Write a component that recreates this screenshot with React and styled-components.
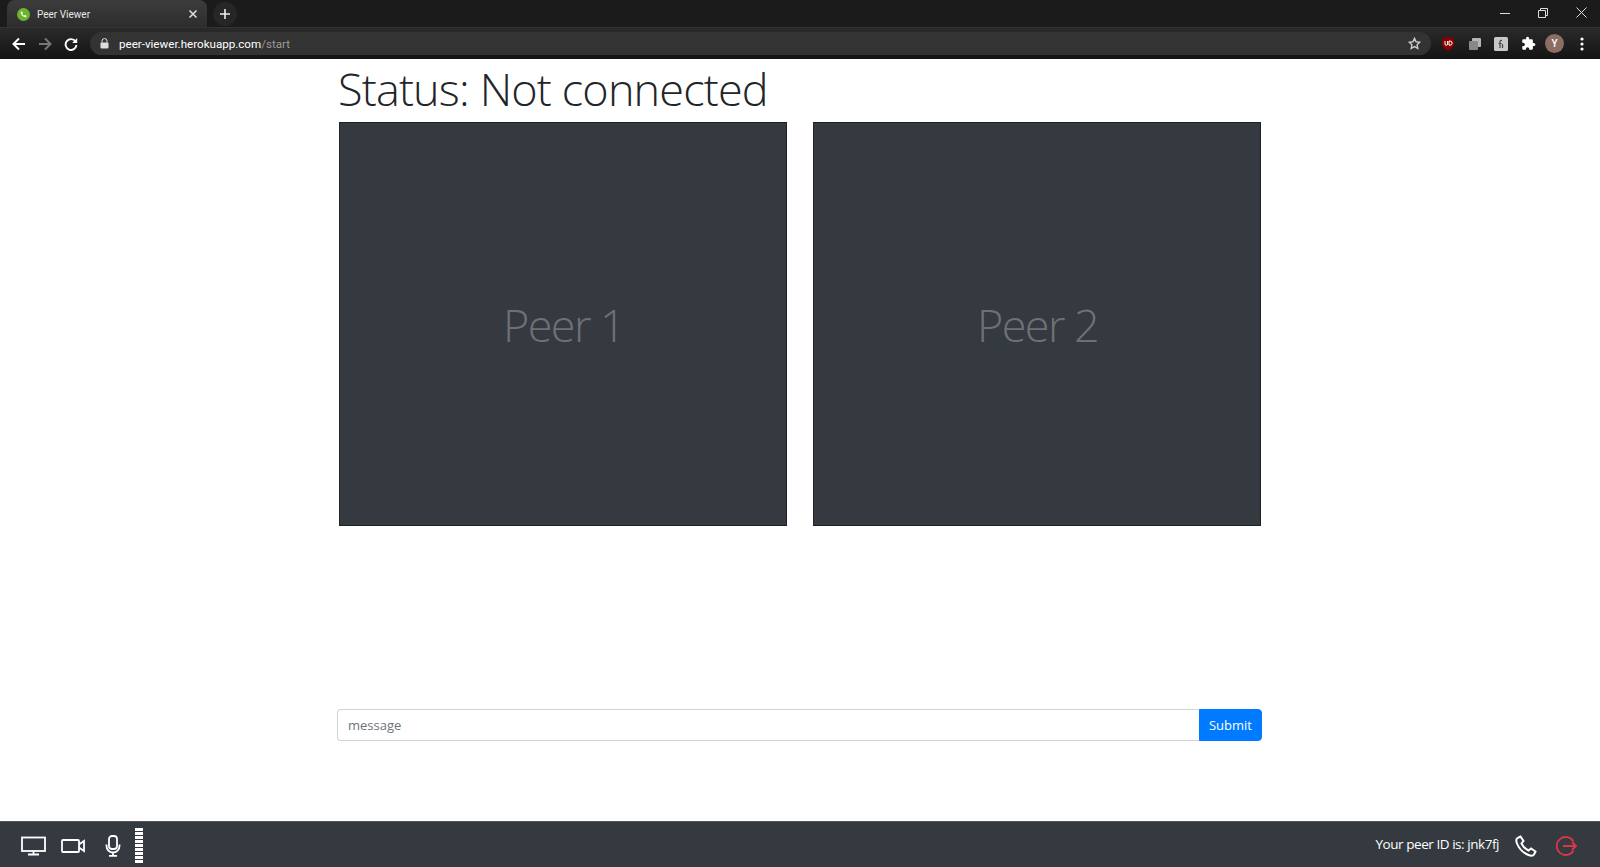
import React from 'react';
import styled, { createGlobalStyle } from 'styled-components';

const GlobalStyle = createGlobalStyle`
  html, body {
    margin: 0;
    padding: 0;
    height: 100%;
    background: #fff;
    overflow: hidden;
  }
  * { box-sizing: border-box; }
`;

const Page = styled.div`
  height: 867px;
  display: flex;
  flex-direction: column;
  font-family: "Open Sans", "Liberation Sans", sans-serif;
`;

const TabStrip = styled.div`
  height: 27px;
  background: #1b1b1b;
  display: flex;
  align-items: flex-end;
  padding-left: 7px;
`;

const Tab = styled.div`
  width: 200px;
  height: 27px;
  border-radius: 8px 8px 0 0;
  background: linear-gradient(#3c3c3c, #2d2d2d);
  display: flex;
  align-items: center;
  padding: 1px 9px 0 10px;
  color: #e8e8e8;
  font: 10px "Roboto", sans-serif;
`;

const TabTitle = styled.span`
  margin-left: 7px;
  flex: 1;
`;

const NewTab = styled.div`
  width: 24px;
  height: 24px;
  margin: 0 0 1px 6px;
  border-radius: 50%;
  background: #262626;
  display: flex;
  align-items: center;
  justify-content: center;
`;

const WindowControls = styled.div`
  margin-left: auto;
  height: 27px;
  display: flex;
  align-items: center;
  gap: 22px;
  padding: 0 11px 2px 0;
`;

const WindowButton = styled.div`
  width: 16px;
  height: 16px;
  display: flex;
  align-items: center;
  justify-content: center;
`;

const AddressBar = styled.div`
  height: 32px;
  background: linear-gradient(#2a2a2a, #141414);
  border-top: 1px solid #333;
  display: flex;
  align-items: center;
  padding: 0 8px 0 10px;
`;

const NavIcons = styled.div`
  display: flex;
  align-items: center;
  gap: 8px;
  width: 80px;
`;

const NavIcon = styled.div`
  width: 18px;
  height: 18px;
  display: flex;
  align-items: center;
  justify-content: center;
`;

const Omnibox = styled.div`
  width: 1341px;
  height: 23px;
  border-radius: 12px;
  background: #333;
  display: flex;
  align-items: center;
  padding: 0 10px 0 10px;
  font: 11.6px "Roboto", sans-serif;
  color: #fff;
`;

const UrlText = styled.span`
  margin-left: 10px;
  flex: 1;
`;

const UrlPath = styled.span`
  color: #9a9a9a;
`;

const Extensions = styled.div`
  display: flex;
  align-items: center;
  gap: 12.5px;
  margin-left: 10px;
`;

const Avatar = styled.div`
  width: 19px;
  height: 19px;
  margin: 0 3px 0 -3px;
  border-radius: 50%;
  background: #8d6e63;
  color: #fff;
  font: 500 10px/19px "Roboto", sans-serif;
  text-align: center;
`;

const Main = styled.main`
  flex: 1;
  width: 925px;
  margin-left: 337px;
  display: flex;
  flex-direction: column;
`;

const Status = styled.h1`
  margin: 0;
  height: 63px;
  padding-left: 1px;
  font-size: 45px;
  font-weight: 300;
  line-height: 59px;
  letter-spacing: -0.85px;
  color: #212529;
  white-space: nowrap;
`;

const Videos = styled.div`
  display: flex;
  gap: 26px;
  padding-left: 2px;
`;

const VideoBox = styled.div`
  width: 448px;
  height: 404px;
  padding-left: 1px;
  background: #343a40;
  border: 1px solid #1d2125;
  border-left-color: #23272b;
  display: flex;
  align-items: center;
  justify-content: center;
  color: #6e7174;
  font-size: 45px;
  font-weight: 300;
  letter-spacing: -1.6px;
`;

const MessageForm = styled.form`
  display: flex;
  height: 32px;
  margin-top: 183px;
`;

const MessageInput = styled.input`
  flex: 1;
  min-width: 0;
  height: 32px;
  padding: 0 10px;
  border: 1px solid #ced4da;
  border-right: 0;
  border-radius: 4px 0 0 4px;
  font: 13px "Open Sans", sans-serif;
  outline: none;
  &::placeholder { color: #6c757d; }
`;

const SubmitButton = styled.button`
  width: 63px;
  height: 32px;
  border: 1px solid #007bff;
  border-radius: 0 4px 4px 0;
  background: #007bff;
  color: #fff;
  font: 13px "Open Sans", sans-serif;
  padding: 0;
`;

const Footer = styled.footer`
  height: 46px;
  background: #343a40;
  border-top: 1px solid #50555a;
  display: flex;
  align-items: center;
  padding: 3px 23px 0 21px;
`;

const MediaControls = styled.div`
  display: flex;
  align-items: center;
`;

const IconSlot = styled.div`
  display: flex;
  align-items: center;
  justify-content: center;
  width: ${p => p.$w}px;
  margin-right: ${p => p.$gap || 0}px;
`;

const MicLevel = styled.div`
  width: 8px;
  height: 36px;
  background: repeating-linear-gradient(#fff 0 3px, #343a40 3px 4px);
`;

const PeerInfo = styled.div`
  margin-left: auto;
  display: flex;
  align-items: center;
  color: #fff;
  font-size: 13.5px;
  letter-spacing: -0.45px;
`;

const PeerLabel = styled.span`
  margin: 0 16px 5px 0;
`;

const App = () => (
  <>
    <GlobalStyle />
    <Page>
      <header>
        <TabStrip>
          <Tab>
            <svg width="13" height="13" viewBox="0 0 24 24">
              <circle cx="12" cy="12" r="12" fill="#6bb52e" />
              <path d="M8 6.5l2 .4.8 3-1.3 1c.7 1.5 2 2.800 3.600 3.500l1.100-1.300 3 .8.300 2c-.5.900-1.500 1.300-2.500 1.100-4.500-.9-7.500-4-8.300-8.200C6.500 7.800 7 6.900 8 6.500z" fill="#fff" />
            </svg>
            <TabTitle>Peer Viewer</TabTitle>
            <svg width="10" height="10" viewBox="0 0 10 10" stroke="#ddd" strokeWidth="1.6">
              <path d="M1.500 1.500l7 7M8.500 1.500l-7 7" />
            </svg>
          </Tab>
          <NewTab>
            <svg width="12" height="12" viewBox="0 0 12 12" stroke="#eee" strokeWidth="1.600">
              <path d="M6 1v10M1 6h10" />
            </svg>
          </NewTab>
          <WindowControls>
            <WindowButton>
              <svg width="10" height="10" viewBox="0 0 10 10" stroke="#ddd">
                <path d="M0 5.500h10" />
              </svg>
            </WindowButton>
            <WindowButton>
              <svg width="10" height="10" viewBox="0 0 10 10" stroke="#ddd" fill="none">
                <path d="M.5 2.500h7v7h-7zM2.500 2.500v-2h7v7h-2" />
              </svg>
            </WindowButton>
            <WindowButton>
              <svg width="11" height="11" viewBox="0 0 11 11" stroke="#ddd">
                <path d="M.5.5l10 10M10.500.5l-10 10" />
              </svg>
            </WindowButton>
          </WindowControls>
        </TabStrip>
        <AddressBar>
          <NavIcons>
            <NavIcon>
              <svg width="14" height="14" viewBox="0 0 14 14" stroke="#fff" strokeWidth="2" fill="none">
                <path d="M13 7H2M7 1.500L1.500 7 7 12.500" />
              </svg>
            </NavIcon>
            <NavIcon>
              <svg width="14" height="14" viewBox="0 0 14 14" stroke="#777" strokeWidth="2" fill="none">
                <path d="M1 7h11M7 1.500L12.500 7 7 12.500" />
              </svg>
            </NavIcon>
            <NavIcon>
              <svg width="14" height="14" viewBox="0 0 14 14" fill="none">
                <path d="M11.500 4.500A5.400 5.400 0 1 0 12.400 8" stroke="#fff" strokeWidth="1.900" />
                <path d="M13.200 1v5h-5z" fill="#fff" />
              </svg>
            </NavIcon>
          </NavIcons>
          <Omnibox>
            <svg width="9" height="11" viewBox="0 0 9 11">
              <path d="M2 4.500V3a2.500 2.500 0 0 1 5 0v1.500" stroke="#ddd" strokeWidth="1" fill="none" />
              <rect x="0.500" y="4.500" width="8" height="6" rx="1" fill="#ddd" />
            </svg>
            <UrlText>peer-viewer.herokuapp.com<UrlPath>/start</UrlPath></UrlText>
            <svg width="13" height="13" viewBox="0 0 24 24" fill="none" stroke="#ccc" strokeWidth="2.500">
              <path d="M12 2.500l2.900 6.300 6.900.8-5.100 4.700 1.400 6.800-6.100-3.400-6.100 3.400 1.400-6.800-5.100-4.700 6.900-.8z" />
            </svg>
          </Omnibox>
          <Extensions>
            <svg width="14" height="15" viewBox="0 0 14 15">
              <path d="M7 .5l6 2v5c0 3.500-2.500 5.800-6 7-3.500-1.200-6-3.500-6-7v-5z" fill="#800" />
              <path d="M4 5v3a1.300 1.300 0 0 0 2.600 0V5M8 5v4.200h1a2 2 0 0 0 0-4.200z" fill="none" stroke="#fff" strokeWidth="1" />
            </svg>
            <svg width="14" height="14" viewBox="0 0 14 14">
              <rect x="4" y="1" width="9" height="9" rx="1" fill="#b5b5b5" />
              <rect x="1" y="4" width="9" height="9" rx="1" fill="#888" />
            </svg>
            <svg width="14" height="14" viewBox="0 0 14 14">
              <rect width="14" height="14" rx="1.500" fill="#c8c8c8" />
              <path d="M6 11V4.500c0-1 1-1.500 2-1M4.500 6.500h3M8.500 7v4" stroke="#444" strokeWidth="1.200" fill="none" />
            </svg>
            <svg width="15" height="15" viewBox="0 0 24 24" fill="#fff">
              <path d="M20.500 11H19V7a2 2 0 0 0-2-2h-4V3.500a2.500 2.500 0 0 0-5 0V5H4a2 2 0 0 0-2 2v3.800h1.500a2.700 2.700 0 0 1 0 5.400H2V20a2 2 0 0 0 2 2h3.800v-1.500a2.700 2.700 0 0 1 5.400 0V22H17a2 2 0 0 0 2-2v-4h1.500a2.500 2.500 0 0 0 0-5z" />
            </svg>
            <Avatar>Y</Avatar>
            <svg width="4" height="14" viewBox="0 0 4 14" fill="#fff">
              <circle cx="2" cy="2" r="1.600" />
              <circle cx="2" cy="7" r="1.600" />
              <circle cx="2" cy="12" r="1.600" />
            </svg>
          </Extensions>
        </AddressBar>
      </header>
      <Main>
        <Status>Status: Not connected</Status>
        <Videos>
          <VideoBox>Peer 1</VideoBox>
          <VideoBox>Peer 2</VideoBox>
        </Videos>
        <MessageForm>
          <MessageInput placeholder="message" />
          <SubmitButton type="button">Submit</SubmitButton>
        </MessageForm>
      </Main>
      <Footer>
        <MediaControls>
          <IconSlot $w={25} $gap={15}>
            <svg width="25" height="20" viewBox="0 0 25 20" fill="none" stroke="#fff" strokeWidth="1.800">
              <rect x="1" y="1.500" width="23" height="13.500" />
              <path d="M12.500 15v3M7 18.500h11" />
            </svg>
          </IconSlot>
          <IconSlot $w={24} $gap={20}>
            <svg width="24" height="16" viewBox="0 0 24 16" fill="none" stroke="#fff" strokeWidth="1.800">
              <rect x="1" y="2" width="17" height="12" rx="1" />
              <path d="M18 6.500l5-3.500v10l-5-3.500" />
            </svg>
          </IconSlot>
          <IconSlot $w={16} $gap={14}>
            <svg width="16" height="22" viewBox="0 0 16 22" fill="none" stroke="#fff" strokeWidth="1.800">
              <rect x="4" y="1" width="8" height="13" rx="3" />
              <path d="M1.500 9.500v1.500a6.500 6.500 0 0 0 13 0V9.500M8 17.500v3M4 20.800h8" />
            </svg>
          </IconSlot>
          <MicLevel />
        </MediaControls>
        <PeerInfo>
          <PeerLabel>Your peer ID is: jnk7fj</PeerLabel>
          <IconSlot $w={22} $gap={19}>
            <svg width="22" height="22" viewBox="0 0 22 22" fill="none" stroke="#fff" strokeWidth="2">
              <path d="M5.500 1.500L2.500 3C1 4 1 6 2 8.500c2 5 6.500 9.500 11.500 11.500 2.500 1 4.500 1 5.500-.5l1.500-3-4.500-3-2.500 2c-3-1.500-5.500-4-7-7l2-2.500z" />
            </svg>
          </IconSlot>
          <IconSlot $w={21}>
            <svg width="21" height="20" viewBox="0 0 21 20" fill="none" stroke="#dc3545" strokeWidth="1.800">
              <path d="M17.500 5.500A9 9 0 1 0 17.500 14.500M7 10h13M16 6l4 4-4 4" />
            </svg>
          </IconSlot>
        </PeerInfo>
      </Footer>
    </Page>
  </>
);

export default App;
